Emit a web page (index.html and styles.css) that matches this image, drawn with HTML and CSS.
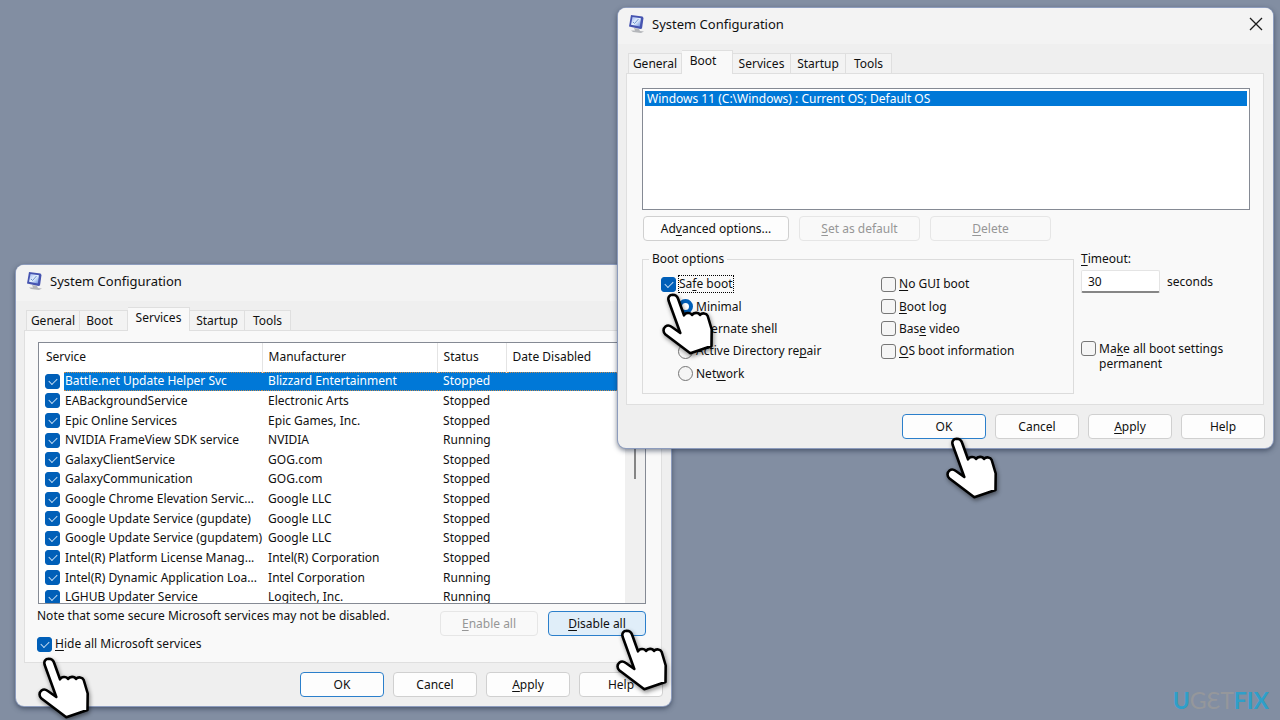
FILE: index.html
```html
<!DOCTYPE html>
<html lang="en">
<head>
<meta charset="utf-8">
<title>System Configuration</title>
<link rel="stylesheet" href="styles.css">
</head>
<body>
<svg class="defs" width="0" height="0" aria-hidden="true">
  <defs>
    <linearGradient id="screen" x1="0" y1="0" x2="1" y2="1"><stop offset="0" stop-color="#9fb4f0"/><stop offset=".5" stop-color="#e8f4ff"/><stop offset="1" stop-color="#5f86dc"/></linearGradient>
    <symbol id="hand" viewBox="0 0 54 66">
      <path d="M6.7 8C5.500 4 7.500 1.800 10.700 1.700C13.500 1.700 15.200 3 16 5.500L22 22.300C23 19.500 28.500 19 30 22C31.500 19.300 36.500 19 38 22C40 19.500 44.500 20 45.700 23L49.700 36.500L49.500 53L28.300 60.300L3.500 41.500C.8 39 1 35.500 3.500 33.500C5.500 32 7.500 32.300 9.500 33.800L18.300 40Z" fill="#fff" stroke="#000" stroke-width="2.600" stroke-linejoin="round"/>
    </symbol>
    <symbol id="monitor" viewBox="0 0 18 20">
      <path d="M6 14L11 15L12 17L16 17.500L13 19L5 18L3 16.500L7 16.500Z" fill="#b4b6ba"/>
      <path d="M3 1L14.500 2.500L15.500 4L14 14.500L12.500 15L1 12.500Z" fill="#4654b0"/>
      <path d="M4.500 3L13 4.200L11.800 12.500L3 10.800Z" fill="url(#screen)"/>
      <path d="M5 8L6.500 9.500L10.500 5" fill="none" stroke="#6d92cb" stroke-width="1"/>
    </symbol>
  </defs>
</svg>
<main class="desktop">

  <section class="window services-window" aria-label="System Configuration, Services">
    <header class="titlebar"><svg class="app-icon"><use href="#monitor"/></svg><h1>System Configuration</h1></header>
    <nav class="tabs" role="tablist">
      <button class="tab general" role="tab">General</button><button class="tab boot" role="tab">Boot</button><button class="tab services active" role="tab" aria-selected="true">Services</button><button class="tab startup" role="tab">Startup</button><button class="tab tools" role="tab">Tools</button>
    </nav>
    <div class="panel">
      <div class="table-box">
        <table class="service-table">
          <colgroup><col class="c-check"><col class="c-name"><col class="c-maker"><col class="c-status"><col></colgroup>
          <thead><tr><th colspan="2" class="first">Service</th><th>Manufacturer</th><th>Status</th><th>Date Disabled</th></tr></thead>
          <tbody>
            <tr class="selected"><td><input type="checkbox" checked aria-label="Battle.net Update Helper Svc"></td><td>Battle.net Update Helper Svc</td><td>Blizzard Entertainment</td><td>Stopped</td><td></td></tr>
            <tr><td><input type="checkbox" checked aria-label="EABackgroundService"></td><td>EABackgroundService</td><td>Electronic Arts</td><td>Stopped</td><td></td></tr>
            <tr><td><input type="checkbox" checked aria-label="Epic Online Services"></td><td>Epic Online Services</td><td>Epic Games, Inc.</td><td>Stopped</td><td></td></tr>
            <tr><td><input type="checkbox" checked aria-label="NVIDIA FrameView SDK service"></td><td>NVIDIA FrameView SDK service</td><td>NVIDIA</td><td>Running</td><td></td></tr>
            <tr><td><input type="checkbox" checked aria-label="GalaxyClientService"></td><td>GalaxyClientService</td><td>GOG.com</td><td>Stopped</td><td></td></tr>
            <tr><td><input type="checkbox" checked aria-label="GalaxyCommunication"></td><td>GalaxyCommunication</td><td>GOG.com</td><td>Stopped</td><td></td></tr>
            <tr><td><input type="checkbox" checked aria-label="Google Chrome Elevation Service"></td><td>Google Chrome Elevation Servic...</td><td>Google LLC</td><td>Stopped</td><td></td></tr>
            <tr><td><input type="checkbox" checked aria-label="Google Update Service (gupdate)"></td><td>Google Update Service (gupdate)</td><td>Google LLC</td><td>Stopped</td><td></td></tr>
            <tr><td><input type="checkbox" checked aria-label="Google Update Service (gupdatem)"></td><td>Google Update Service (gupdatem)</td><td>Google LLC</td><td>Stopped</td><td></td></tr>
            <tr><td><input type="checkbox" checked aria-label="Intel(R) Platform License Manager"></td><td>Intel(R) Platform License Manag...</td><td>Intel(R) Corporation</td><td>Stopped</td><td></td></tr>
            <tr><td><input type="checkbox" checked aria-label="Intel(R) Dynamic Application Loader"></td><td>Intel(R) Dynamic Application Loa...</td><td>Intel Corporation</td><td>Running</td><td></td></tr>
            <tr><td><input type="checkbox" checked aria-label="LGHUB Updater Service"></td><td>LGHUB Updater Service</td><td>Logitech, Inc.</td><td>Running</td><td></td></tr>
          </tbody>
        </table>
        <div class="scrollbar"><div class="thumb"></div></div>
      </div>
      <div class="below-table">
        <div class="notes">
          <p>Note that some secure Microsoft services may not be disabled.</p>
          <label class="option"><input type="checkbox" checked><span><u>H</u>ide all Microsoft services</span></label>
        </div>
        <button class="btn enable" disabled><u>E</u>nable all</button>
        <button class="btn disable hot"><u>D</u>isable all</button>
      </div>
    </div>
    <footer class="actions"><button class="btn primary">OK</button><button class="btn">Cancel</button><button class="btn"><u>A</u>pply</button><button class="btn">Help</button></footer>
    <svg class="cursor at-hide"><use href="#hand"/></svg>
    <svg class="cursor at-disable"><use href="#hand"/></svg>
  </section>

  <section class="window boot-window" aria-label="System Configuration, Boot">
    <header class="titlebar"><svg class="app-icon"><use href="#monitor"/></svg><h1>System Configuration</h1>
      <button class="close" aria-label="Close"><svg viewBox="0 0 14 14"><path d="M1 1L13 13M13 1L1 13" stroke="#1c1c1c" stroke-width="1.300" fill="none"/></svg></button></header>
    <nav class="tabs" role="tablist">
      <button class="tab general" role="tab">General</button><button class="tab boot active" role="tab" aria-selected="true">Boot</button><button class="tab services" role="tab">Services</button><button class="tab startup" role="tab">Startup</button><button class="tab tools" role="tab">Tools</button>
    </nav>
    <div class="panel">
      <ul class="os-list"><li>Windows 11 (C:\Windows) : Current OS; Default OS</li></ul>
      <div class="os-actions"><button class="btn advanced">Ad<u>v</u>anced options...</button><button class="btn" disabled><u>S</u>et as default</button><button class="btn" disabled><u>D</u>elete</button></div>
      <div class="settings">
        <fieldset class="boot-options">
          <legend>Boot options</legend>
          <div class="column">
            <label class="option"><input type="checkbox" checked><span class="focused">Sa<u>f</u>e boot</span></label>
            <label class="option sub"><input type="radio" name="mode" checked><span><u>M</u>inimal</span></label>
            <label class="option sub"><input type="radio" name="mode"><span>A<u>l</u>ternate shell</span></label>
            <label class="option sub"><input type="radio" name="mode"><span>Active Directory re<u>p</u>air</span></label>
            <label class="option sub"><input type="radio" name="mode"><span>Net<u>w</u>ork</span></label>
          </div>
          <div class="column">
            <label class="option"><input type="checkbox"><span><u>N</u>o GUI boot</span></label>
            <label class="option"><input type="checkbox"><span><u>B</u>oot log</span></label>
            <label class="option"><input type="checkbox"><span>Bas<u>e</u> video</span></label>
            <label class="option"><input type="checkbox"><span><u>O</u>S boot information</span></label>
          </div>
        </fieldset>
        <div class="timeout">
          <label for="timeout"><u>T</u>imeout:</label>
          <div class="seconds"><input id="timeout" type="text" value="30"><span>seconds</span></div>
          <label class="option permanent"><input type="checkbox"><span>Ma<u>k</u>e all boot settings permanent</span></label>
        </div>
      </div>
    </div>
    <footer class="actions"><button class="btn primary">OK</button><button class="btn">Cancel</button><button class="btn"><u>A</u>pply</button><button class="btn">Help</button></footer>
    <svg class="cursor at-safe"><use href="#hand"/></svg>
    <svg class="cursor at-ok"><use href="#hand"/></svg>
  </section>

  <div class="brand"><b>U</b>G&#x190;T<b>FIX</b></div>
</main>
</body>
</html>
```
FILE: styles.css
```css
* { box-sizing: border-box; }
body { margin: 0; font: 12px/16px "Noto Sans", "Open Sans", sans-serif; color: #101010; }
button, input { font: inherit; color: inherit; margin: 0; }
p, ul, h1 { margin: 0; padding: 0; }
u { text-underline-offset: 2px; text-decoration-skip-ink: none; }
.defs { position: absolute; }
.desktop { position: relative; min-height: 100vh; background: #828ea2; overflow: hidden; }

.window { position: absolute; display: flex; flex-direction: column; width: 655px; background: #efefef; border-radius: 8px; box-shadow: 0 0 0 1px #8d9cbd, 0 2px 5px 1px rgba(30, 42, 66, .55); }
.services-window { left: 16px; top: 265px; }
.boot-window { left: 618px; top: 8px; }
.titlebar { display: flex; align-items: center; gap: 6px; height: 36px; padding: 0 10px 4px; background: #f3f3f3; border-radius: 8px 8px 0 0; }
.titlebar h1 { flex: 1; font-size: 13px; font-weight: 400; line-height: 18px; }
.app-icon { width: 18px; height: 20px; }
.close { display: flex; padding: 0; border: 0; background: none; }
.close svg { width: 14px; height: 14px; }

.tabs { display: flex; align-items: flex-end; height: 29px; margin-left: 10px; }
.tab { height: 20px; padding: 0; border: 1px solid #dfdfdf; border-width: 1px 1px 0 0; background: #f3f3f3; white-space: nowrap; }
.tab:first-child { border-left-width: 1px; }
.tab.active { position: relative; height: 24px; padding-bottom: 3px; margin-bottom: -1px; background: #f9f9f9; }
.general { width: 54px; }
.boot { width: 48px; padding-right: 8px; }
.boot.active { width: 51px; }
.services { width: 58px; }
.services.active { width: 62px; }
.startup { width: 55px; }
.tools { width: 46px; }
.panel { margin: 0 9px 0 8px; border: 1px solid #dfdfdf; background: #f9f9f9; }

.btn { height: 25px; padding: 0; border: 1px solid #d0d0d0; border-radius: 4px; background: #fdfdfd; }
.btn:disabled { color: #969696; background: #f9f9f9; border-color: #e6e6e6; }
.btn.primary, .btn.hot { border-color: #2b7fcb; }
.btn.hot { background: #e0eef9; }
.actions { display: flex; justify-content: flex-end; gap: 9px; padding: 9px 8px; }
.actions .btn { width: 84px; }

input[type="checkbox"], input[type="radio"] { appearance: none; flex: none; display: grid; place-items: center; width: 15px; height: 15px; border: 1px solid #767676; border-radius: 3px; background: #f5f5f5; }
input[type="checkbox"]:checked { border-color: #005fb8; background: #005fb8; }
input[type="checkbox"]:checked::before { content: ""; width: 7px; height: 4px; margin-bottom: 2px; border: solid #c2dbf2; border-width: 0 0 1px 1px; transform: rotate(-45deg); }
input[type="radio"] { border-radius: 50%; }
input[type="radio"]:checked { border: 4px solid #005fb8; background: #fff; }
.option { display: flex; align-items: center; gap: 3px; }

.table-box { display: flex; height: 262px; margin: 11px 15px 0 13px; border: 1px solid #858a94; background: #fff; overflow: hidden; }
.service-table { flex: 1; height: 264px; table-layout: fixed; border-collapse: collapse; white-space: nowrap; }
.c-check { width: 25px; }
.c-name { width: 196px; }
.c-maker { width: 175px; }
.c-status { width: 69px; }
.service-table th { height: 29px; padding: 0 0 0 6px; font-weight: 400; text-align: left; border-right: 1px solid #e4e4e4; }
.service-table th.first { padding-left: 7px; }
.service-table th:last-child { border-right: 0; }
.service-table td { padding: 0 0 0 6px; }
.service-table td:nth-child(2) { padding-left: 1px; }
.service-table td + td { line-height: 18px; }
.selected td + td { color: #fff; background: #0078d7; border-top: 1px dotted #c08a50; border-bottom: 1px dotted #c08a50; line-height: 16px; }
.scrollbar { display: flex; justify-content: center; width: 20px; background: #f0f0f0; }
.thumb { width: 2px; height: 106px; margin-top: 30px; background: #858585; }
.below-table { display: flex; gap: 10px; height: 58px; padding: 0 15px 0 12px; }
.notes { display: flex; flex: 1; flex-direction: column; gap: 12px; padding-top: 4px; }
.enable, .disable { width: 98px; margin-top: 7px; }

.os-list { height: 122px; margin: 14px 13px 6px 15px; padding: 2px; border: 1px solid #858a94; background: #fff; list-style: none; }
.os-list li { padding-left: 2px; height: 15px; line-height: 15px; color: #fff; background: #0078d7; }
.os-actions { display: flex; gap: 10px; margin: 0 16px; }
.os-actions .btn { width: 121px; }
.os-actions .advanced { width: 146px; }
.settings { display: flex; gap: 7px; height: 163px; padding: 10px 12px 10px 15px; }
.boot-options { display: flex; width: 432px; height: 143px; margin: 0; padding: 6px 9px 0 18px; border: 1px solid #dcdcdc; }
.boot-options legend { margin-left: -12px; padding: 0 3px; }
.column { display: grid; grid-template-rows: repeat(5, 1fr); width: 220px; height: 112px; }
.column + .column { width: 180px; }
.sub { margin-left: 17px; }
.focused { outline: 1px dotted #000; }
.timeout { flex: 1; }
.timeout label { display: flex; }
.seconds { display: flex; align-items: center; gap: 7px; margin-top: 3px; }
.seconds input { width: 79px; height: 23px; padding: 0 6px; border: 1px solid #e4e4e4; border-bottom: 2px solid #868686; border-radius: 2px; background: #fff; }
.timeout .permanent { align-items: flex-start; width: 150px; margin-top: 48px; line-height: 15px; }

.cursor { position: absolute; width: 54px; height: 66px; filter: drop-shadow(1px 2px 2px rgba(0, 0, 0, .45)); pointer-events: none; }
.at-hide { left: 22px; top: 392px; }
.at-disable { left: 600px; top: 364px; }
.at-safe { left: 44px; top: 285px; }
.at-ok { left: 328px; top: 429px; }
.brand { position: absolute; right: 11px; bottom: 6px; font: 23px/28px Lato, sans-serif; color: #95979b; }
.brand b { font-weight: 700; color: #2f9fc9; }
```
